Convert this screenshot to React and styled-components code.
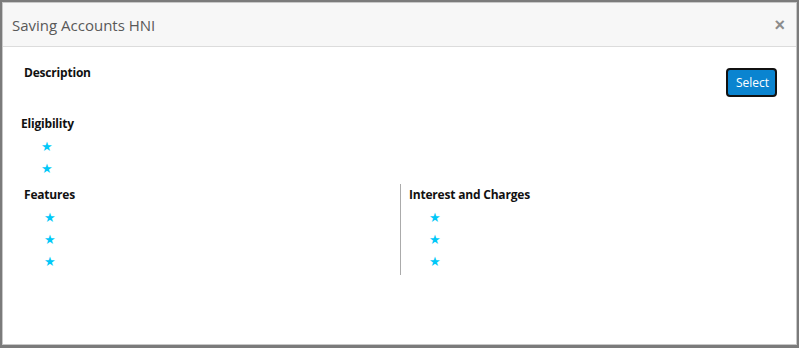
import React from "react";
import styled, { createGlobalStyle } from "styled-components";

const GlobalStyle = createGlobalStyle`
  html, body {
    margin: 0;
    padding: 0;
    background: #7b7b7b;
    font-family: "Open Sans", "Noto Sans", Arial, sans-serif;
  }
`;

const Modal = styled.div`
  margin: 2px 2px 0 2px;
  height: 343px;
  background: #fff;
  box-sizing: border-box;
  border: 1px solid #c8c8c8;
  display: flex;
  flex-direction: column;
`;

const Header = styled.div`
  height: 44px;
  box-sizing: border-box;
  padding: 0 11px 0 9px;
  background: #f7f7f7;
  border-bottom: 1px solid #dcdcdc;
  display: flex;
  align-items: center;
  justify-content: space-between;
`;

const Title = styled.h4`
  margin: 0;
  font-size: 15px;
  font-weight: 400;
  color: #595959;
`;

const Close = styled.button`
  border: 0;
  background: none;
  padding: 0;
  font-size: 18px;
  font-weight: 700;
  line-height: 1;
  color: #8c8c8c;
  cursor: pointer;
`;

const Body = styled.div`
  padding: 17px 19px 0 0;
`;

const TopRow = styled.div`
  display: flex;
  justify-content: space-between;
  align-items: flex-start;
  padding-left: 21px;
`;

const Label = styled.div`
  font-size: 12px;
  font-weight: 700;
  color: #111;
  letter-spacing: -0.2px;
  line-height: ${(p) => p.$lh || 22}px;
`;

const SelectButton = styled.button`
  margin-top: 4px;
  width: 51px;
  height: 29px;
  box-sizing: border-box;
  border: 2px solid #111;
  border-radius: 4px;
  background: #0a84d0;
  color: #fff;
  font-family: inherit;
  font-size: 12px;
  padding: 0 0 0 2px;
  cursor: pointer;
`;

const Section = styled.div`
  margin-top: 16px;
  padding-left: 18px;
`;

const StarList = styled.ul`
  list-style: none;
  margin: 0;
  padding: 0 0 0 20px;
`;

const Star = styled.li`
  height: 22px;
  line-height: 23px;
  font-size: 13px;
  color: #00c8f8;
`;

const Columns = styled.div`
  margin-top: 5px;
  display: grid;
  grid-template-columns: 376px 1fr;
  padding-left: 21px;
`;

const Column = styled.div`
  padding-left: ${(p) => (p.$right ? 8 : 0)}px;
  border-left: ${(p) => (p.$right ? "1px solid #ababab" : "none")};
  padding-bottom: 3px;
`;

const Stars = ({ count }) => (
  <StarList>
    {Array.from({ length: count }).map((_, i) => (
      <Star key={i}>★</Star>
    ))}
  </StarList>
);

export default function App() {
  return (
    <>
      <GlobalStyle />
      <Modal>
        <Header>
          <Title>Saving Accounts HNI</Title>
          <Close aria-label="Close">×</Close>
        </Header>
        <Body>
          <TopRow>
            <Label $lh={18}>Description</Label>
            <SelectButton>Select</SelectButton>
          </TopRow>
          <Section>
            <Label>Eligibility</Label>
            <Stars count={2} />
          </Section>
          <Columns>
            <Column>
              <Label>Features</Label>
              <Stars count={3} />
            </Column>
            <Column $right>
              <Label>Interest and Charges</Label>
              <Stars count={3} />
            </Column>
          </Columns>
        </Body>
      </Modal>
    </>
  );
}
